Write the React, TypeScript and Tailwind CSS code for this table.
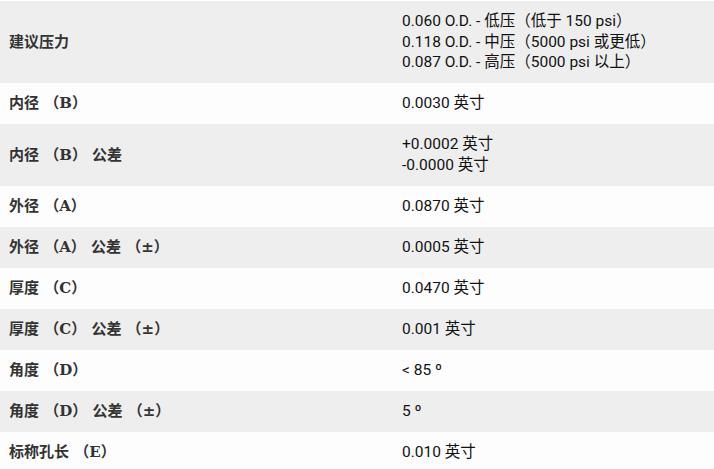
const rows: { label: string; value: string[] }[] = [
  {
    label: "建议压力",
    value: [
      "0.060 O.D. - 低压（低于 150 psi）",
      "0.118 O.D. - 中压（5000 psi 或更低）",
      "0.087 O.D. - 高压（5000 psi 以上）",
    ],
  },
  { label: "内径 （B）", value: ["0.0030 英寸"] },
  { label: "内径 （B） 公差", value: ["+0.0002 英寸", "-0.0000 英寸"] },
  { label: "外径 （A）", value: ["0.0870 英寸"] },
  { label: "外径 （A） 公差 （±）", value: ["0.0005 英寸"] },
  { label: "厚度 （C）", value: ["0.0470 英寸"] },
  { label: "厚度 （C） 公差 （±）", value: ["0.001 英寸"] },
  { label: "角度 （D）", value: ["< 85 º"] },
  { label: "角度 （D） 公差 （±）", value: ["5 º"] },
  { label: "标称孔长 （E）", value: ["0.010 英寸"] },
];

export default function App() {
  return (
    <div className="w-[714px] h-[469px] overflow-hidden bg-white pt-px">
      {rows.map((row, i) => (
        <div
          key={i}
          className={`grid grid-cols-[393px_1fr] ${i % 2 === 0 ? "bg-[#eeeeee]" : "bg-[#fdfdfd]"}`}
        >
          <div
            className="flex items-center px-[9px] py-[10.25px] text-[15px] leading-[20.5px] font-bold text-[#333333]"
            style={{ fontFamily: '"DejaVu Serif", "Noto Sans CJK SC", serif' }}
          >
            {row.label}
          </div>
          <div
            className="px-[9px] py-[10.25px] text-[15.5px] leading-[20.5px] text-[#111111]"
            style={{ fontFamily: 'Roboto, "Noto Sans CJK SC", sans-serif' }}
          >
            {row.value.map((v, j) => (
              <div key={j}>{v}</div>
            ))}
          </div>
        </div>
      ))}
    </div>
  );
}
